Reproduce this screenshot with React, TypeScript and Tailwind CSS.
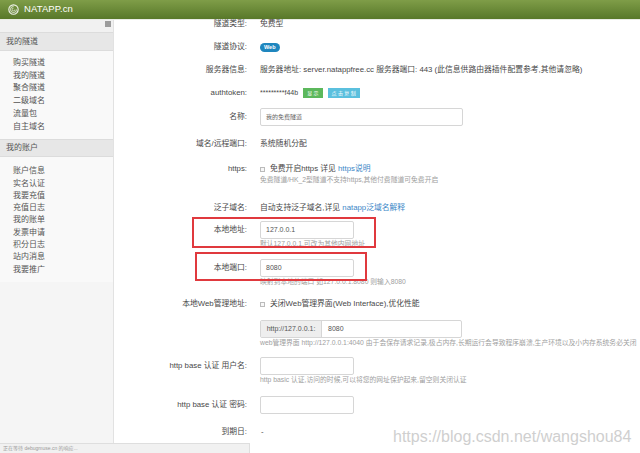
import type { ReactNode } from "react";

const tunnelMenu = ["购买隧道", "我的隧道", "聚合隧道", "二级域名", "流量包", "自主域名"];
const accountMenu = ["账户信息", "实名认证", "我要充值", "充值日志", "我的账单", "发票申请", "积分日志", "站内消息", "我要推广"];

function Logo() {
  return (
    <svg width="11" height="11" viewBox="0 0 20 20" fill="none">
      <circle cx="10" cy="10" r="8.5" stroke="#fff" strokeWidth="2" opacity="0.9" />
      <path d="M10 4.5a5.5 5.5 0 1 0 5.5 5.5" stroke="#fff" strokeWidth="1.6" opacity="0.85" />
      <path d="M10 7.5a2.5 2.5 0 1 0 2.5 2.5" stroke="#fff" strokeWidth="1.4" opacity="0.8" />
    </svg>
  );
}

function Row({ label, className, h, children }: { label: string; className: string; h: string; children: ReactNode }) {
  return (
    <div className={"flex " + className}>
      <div className={"flex w-[146px] shrink-0 items-center justify-end whitespace-nowrap pr-[13px] " + h}>{label}</div>
      <div className="flex min-w-0 flex-1 flex-col">{children}</div>
    </div>
  );
}

function Input({ value, w, muted }: { value?: string; w: string; muted?: boolean }) {
  return (
    <div className={"flex h-[18px] items-center rounded-[2px] border border-[#d6d6d6] bg-white px-[5px] " + w}>
      <span className={muted ? "text-[6px] text-[#666]" : "text-[7px] text-[#555]"}>{value}</span>
    </div>
  );
}

function Hint({ children }: { children: ReactNode }) {
  return <div className="h-[10px] whitespace-nowrap text-[6.8px] leading-[10px] text-[#a0a0a0]">{children}</div>;
}

function Check() {
  return <span className="mr-[5px] inline-block h-[5px] w-[5px] border border-[#bbb] bg-[#f7f7f7]" />;
}

export default function App() {
  return (
    <div className="relative h-[453px] w-[640px] overflow-hidden bg-white font-['Liberation_Sans','Noto_Sans_CJK_SC',sans-serif] text-[#484848]">
      <header className="flex h-[20px] items-center gap-[5px] border-b border-[#e9ece4] bg-linear-to-b from-[#7f9d48] to-[#587829] pl-[8px]">
        <Logo />
        <span className="text-[9.5px] tracking-[0.1px] text-white">NATAPP.cn</span>
      </header>

      <div className="flex h-[433px]">
        <aside className="w-[114px] shrink-0 border-r border-[#e2e2e2] bg-[#f5f5f5] text-[8px] text-[#555]">
          <div className="flex h-[12px] justify-end bg-[#f1f1f1] pr-[2px]">
            <span className="mt-[1px] h-[6px] w-[6px] bg-[#9c9c9c]" />
          </div>
          <div className="flex h-[19px] items-center border-y border-[#dcdcdc] bg-[#e7e7e7] pl-[6px]">我的隧道</div>
          <ul className="bg-[#f9f9f9] pb-[6px] pl-[13px] pt-[6px]">
            {tunnelMenu.map((m) => (
              <li key={m} className="leading-[12.7px]">{m}</li>
            ))}
          </ul>
          <div className="flex h-[18px] items-center border-y border-[#dcdcdc] bg-[#e7e7e7] pl-[6px]">我的账户</div>
          <ul className="bg-[#f9f9f9] pb-[6px] pl-[13px] pt-[8px]">
            {accountMenu.map((m) => (
              <li key={m} className="leading-[12.3px]">{m}</li>
            ))}
          </ul>
        </aside>

        <main className="flex flex-1 flex-col text-[7.8px] leading-[12px]">
          <Row label="隧道类型:" className="-mt-[2px]" h="h-[12px]">
            <span>免费型</span>
          </Row>
          <Row label="隧道协议:" className="mt-[11px]" h="h-[12px]">
            <div className="flex h-[12px] items-center">
              <span className="rounded-full bg-[#1f86be] px-[4px] text-[5.5px] font-bold leading-[9px] text-white">Web</span>
            </div>
          </Row>
          <Row label="服务器信息:" className="mt-[11px]" h="h-[12px]">
            <span className="whitespace-nowrap">服务器地址: server.natappfree.cc 服务器端口: 443 (此信息供路由器插件配置参考,其他请忽略)</span>
          </Row>
          <Row label="authtoken:" className="mt-[11px]" h="h-[12px]">
            <div className="flex h-[12px] items-center">
              <span className="mr-[5px] text-[7px]">*********f44b</span>
              <span className="mr-[5px] bg-[#5cb85c] px-[4px] text-[5px] leading-[10px] text-white">显 示</span>
              <span className="bg-[#5bc0de] px-[4px] text-[5px] leading-[10px] text-white">点 击 复 制</span>
            </div>
          </Row>
          <Row label="名称:" className="mt-[9px]" h="h-[18px]">
            <Input value="我的免费隧道" w="w-[203px]" muted />
          </Row>
          <Row label="域名/远程端口:" className="mt-[12px]" h="h-[12px]">
            <span>系统随机分配</span>
          </Row>
          <Row label="https:" className="mt-[13px]" h="h-[12px]">
            <div className="flex items-center">
              <Check />
              <span>免费开启https 详见 <span className="text-[#3b87c7]">https说明</span></span>
            </div>
            <Hint>免费隧道/HK_2型隧道不支持https,其他付费隧道可免费开启</Hint>
          </Row>
          <Row label="泛子域名:" className="mt-[17px]" h="h-[12px]">
            <span>自动支持泛子域名,详见 <span className="text-[#3b87c7]">natapp泛域名解释</span></span>
          </Row>
          <Row label="本地地址:" className="mt-[7px]" h="h-[18px]">
            <Input value="127.0.0.1" w="w-[94px]" />
            <Hint>默认127.0.0.1,可改为其他内网地址</Hint>
          </Row>
          <Row label="本地端口:" className="mt-[10px]" h="h-[18px]">
            <Input value="8080" w="w-[94px]" />
            <Hint>映射到本地的端口 如127.0.0.1:8080 则输入8080</Hint>
          </Row>
          <Row label="本地Web管理地址:" className="mt-[11px]" h="h-[12px]">
            <div className="flex items-center">
              <Check />
              <span>关闭Web管理界面(Web Interface),优化性能</span>
            </div>
          </Row>
          <Row label="" className="mt-[10px]" h="h-[18px]">
            <div className="flex h-[18px] w-[202px] rounded-[2px] border border-[#d6d6d6] text-[7px]">
              <span className="flex w-[61px] items-center justify-center border-r border-[#d6d6d6] bg-[#eeeeee] text-[#555]">http://127.0.0.1:</span>
              <span className="flex items-center pl-[6px] text-[#555]">8080</span>
            </div>
            <Hint>web管理界面 http://127.0.0.1:4040 由于会保存请求记录,极占内存,长期运行会导致程序崩溃,生产环境以及小内存系统务必关闭</Hint>
          </Row>
          <Row label="http base 认证 用户名:" className="mt-[9px]" h="h-[18px]">
            <Input w="w-[94px]" />
            <Hint>http basic 认证,访问的时候,可以将您的网址保护起来,留空则关闭认证</Hint>
          </Row>
          <Row label="http base 认证 密码:" className="mt-[11px]" h="h-[18px]">
            <Input w="w-[94px]" />
          </Row>
          <Row label="到期日:" className="mt-[12px]" h="h-[12px]">
            <span className="pl-[1px]">-</span>
          </Row>
        </main>
      </div>

      <div className="absolute left-[192px] top-[217px] h-[31px] w-[184px] border-2 border-[#e0393e]" />
      <div className="absolute left-[195px] top-[252px] h-[29px] w-[172px] border-2 border-[#e0393e]" />

      <div className="absolute left-[393px] top-[427px] text-[16px] leading-[20px] text-[#cfcfcf]">https://blog.csdn.net/wangshou84</div>

      <div className="absolute bottom-0 left-0 flex h-[10px] w-[250px] items-center border-r border-t border-[#dedede] bg-[#f1f1f1] pl-[3px] text-[5px] text-[#999]">
        正在等待 debugmuse.cn 的响应...
      </div>
    </div>
  );
}
